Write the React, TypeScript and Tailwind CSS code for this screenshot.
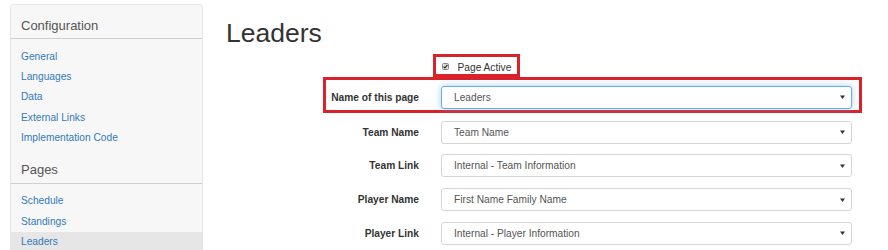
import React from 'react';

const configLinks = ['General', 'Languages', 'Data', 'External Links', 'Implementation Code'];
const pageLinks = ['Schedule', 'Standings', 'Leaders'];

const rows = [
  { label: 'Team Name', value: 'Team Name' },
  { label: 'Team Link', value: 'Internal - Team Information' },
  { label: 'Player Name', value: 'First Name Family Name' },
  { label: 'Player Link', value: 'Internal - Player Information' },
];

const Caret = () => (
  <svg width="5" height="4" viewBox="0 0 5 4" className="shrink-0">
    <path d="M0 0.5 H5 L2.5 4 Z" fill="#333" />
  </svg>
);

const SelectBox = ({ value, focused }: { value: string; focused?: boolean }) => (
  <div
    className={
      focused
        ? 'flex items-center justify-between w-[411px] h-[23px] pl-[12px] pr-[6px] rounded-[3px] border border-[#66afe9] bg-white text-[10.2px] text-[#555] shadow-[0_0_6px_rgba(102,175,233,0.6)]'
        : 'flex items-center justify-between w-[411px] h-[23px] pl-[12px] pr-[6px] rounded-[3px] border border-[#d5d5d5] bg-white text-[10.2px] text-[#555]'
    }
  >
    <span>{value}</span>
    <Caret />
  </div>
);

const SideHeading = ({ title, first }: { title: string; first?: boolean }) => (
  <div
    className={
      first
        ? 'pl-[10px] pt-[12px] pb-[4.4px] border-b border-[#cfcfcf] text-[13px] leading-[17px] text-[#555]'
        : 'mt-[12.6px] pl-[10px] pb-[4.4px] border-b border-[#cfcfcf] text-[13px] leading-[17px] text-[#555]'
    }
  >
    {title}
  </div>
);

export default function App() {
  return (
    <div className="flex w-[888px] h-[250px] overflow-hidden bg-white font-['Liberation_Sans',Arial,sans-serif]">
      {/* sidebar */}
      <aside className="ml-[10px] mt-[4px] w-[193px] h-[260px] shrink-0 rounded-[3px] border border-[#e6e6e6] bg-[#f7f7f7]">
        <SideHeading title="Configuration" first />
        <ul className="pt-[7.2px]">
          {configLinks.map((l) => (
            <li key={l} className="pl-[10px] text-[10.2px] leading-[20.43px] text-[#337ab7]">
              {l}
            </li>
          ))}
        </ul>
        <SideHeading title="Pages" />
        <ul className="pt-[7.4px]">
          {pageLinks.map((l) => (
            <li
              key={l}
              className={
                l === 'Leaders'
                  ? 'pl-[10px] text-[10.2px] leading-[20.43px] text-[#337ab7] bg-[#e6e6e6]'
                  : 'pl-[10px] text-[10.2px] leading-[20.43px] text-[#337ab7]'
              }
            >
              {l}
            </li>
          ))}
        </ul>
      </aside>

      {/* main */}
      <main className="ml-[23px] pt-[18.6px] flex-1">
        <h1 className="text-[26.5px] leading-[29px] font-normal text-[#333]">Leaders</h1>

        <div className="mt-[6.4px] ml-[207px] flex items-start h-[23px] w-[87px] border-[3px] border-[#d9222a]">
          <svg width="7" height="7" viewBox="0 0 7 7" className="ml-[6px] mt-[6px] shrink-0">
            <rect x="0.5" y="0.5" width="6" height="6" rx="1" fill="#dcdcdc" stroke="#8a8a8a" />
            <path d="M1.6 3.6 L2.9 4.9 L5.4 1.9" fill="none" stroke="#222" strokeWidth="1.1" />
          </svg>
          <span className="ml-[8.5px] mt-[3px] text-[10.2px] leading-[15px] text-[#333] whitespace-nowrap">
            Page Active
          </span>
        </div>

        <form className="ml-[97px] flex flex-col gap-[4.7px]">
          <div className="flex items-center w-[539px] border-[3px] border-[#d9222a] pt-[6px] pb-[1px]">
            <label className="w-[93px] text-right font-bold text-[10.2px] text-[#333] whitespace-nowrap">
              Name of this page
            </label>
            <div className="ml-[22px]">
              <SelectBox value="Leaders" focused />
            </div>
          </div>
          {rows.map((r) => (
            <div key={r.label} className="flex items-center w-[539px] border-[3px] border-transparent">
              <label className="w-[93px] text-right font-bold text-[10.2px] text-[#333] whitespace-nowrap">
                {r.label}
              </label>
              <div className="ml-[22px]">
                <SelectBox value={r.value} />
              </div>
            </div>
          ))}
        </form>
      </main>
    </div>
  );
}
